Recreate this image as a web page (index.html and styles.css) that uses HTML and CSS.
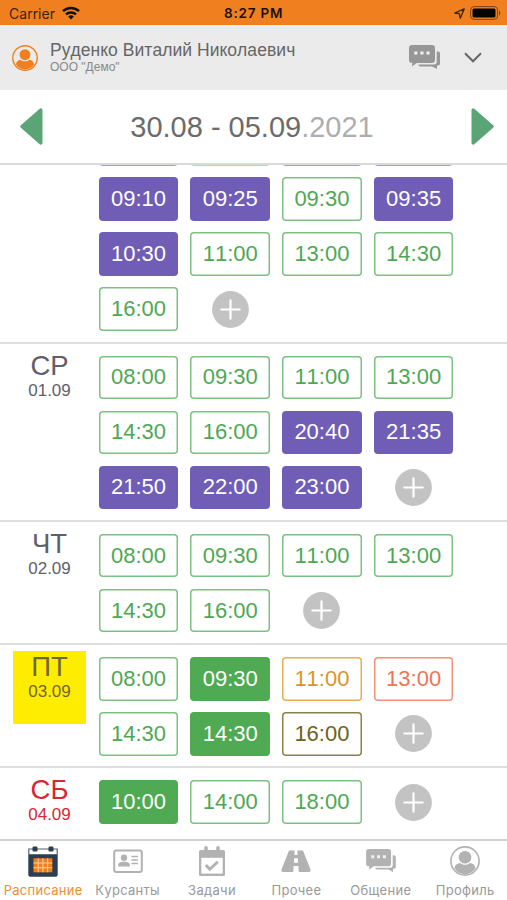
FILE: index.html
```html
<!DOCTYPE html>
<html lang="ru">
<head>
<meta charset="utf-8">
<title>Расписание</title>
<link rel="stylesheet" href="styles.css">
</head>
<body>
<svg class="defs" width="0" height="0" aria-hidden="true">
  <symbol id="plus" viewBox="0 0 37 37"><circle cx="18.5" cy="18.5" r="18.4" fill="#c3c3c3"/><path d="M18.5 9.3v18.4M9.3 18.5h18.4" stroke="#fff" stroke-width="2.2" stroke-linecap="round"/></symbol>
  <symbol id="person" viewBox="0 0 30 30"><circle cx="15" cy="15" r="14.1" fill="none" stroke="currentColor" stroke-width="1.6"/><circle cx="15" cy="11.200" r="6.300" fill="currentColor"/><path d="M4.500 22.200c.6-3.400 2.300-4.400 5.500-5.200 2.500 2.400 7.500 2.400 10 0 3.200.8 4.900 1.800 5.500 5.200C23.300 26 19.500 28.200 15 28.200S6.700 26 4.500 22.200z" fill="currentColor"/></symbol>
  <symbol id="chat" viewBox="0 0 31 24"><path d="M3 0h20a3 3 0 0 1 3 3v12a3 3 0 0 1-3 3H8l-5.200 3.600.6-3.600H3a3 3 0 0 1-3-3V3a3 3 0 0 1 3-3z" fill="currentColor"/><path d="M27.700 6.500H29a2 2 0 0 1 2 2v10a2 2 0 0 1-2 2h-1V24l-5-2.600H11.500a2 2 0 0 1-2-1.900H25a2.700 2.700 0 0 0 2.700-2.700z" fill="currentColor"/><path d="M5.300 6.500h3.100v3.100H5.300zM11.400 6.500h3.100v3.100h-3.100zM17.500 6.500h3.100v3.100h-3.100z" fill="#f1f1f1"/></symbol>
</svg>
<div class="app">
  <div class="status">
    <span class="carrier">Carrier</span>
    <svg class="wifi" width="18" height="14" viewBox="0 0 18 14"><g fill="none" stroke="#111" stroke-width="2.500"><path d="M1 5.200a11.500 11.500 0 0 1 16 0"/><path d="M4 8.400a7.300 7.300 0 0 1 10 0"/></g><path d="M9 13.400l-2.800-2.900a4 4 0 0 1 5.600 0z" fill="#111"/></svg>
    <span class="clock">8:27 PM</span>
    <svg class="locate" width="11" height="11" viewBox="0 0 11 11"><path d="M.8 5L10.200.9 6.200 10.200 5.300 5.700z" fill="none" stroke="#3a210a" stroke-width="1.300" stroke-linejoin="round"/></svg>
    <svg class="battery" width="31" height="14" viewBox="0 0 31 14"><rect x=".6" y=".6" width="27" height="12.800" rx="3.500" fill="none" stroke="#7a4412" stroke-width="1"/><rect x="2.500" y="2.500" width="23" height="9" rx="1.500" fill="#050505"/><path d="M29 4.500c1.600.7 1.600 4.300 0 5z" fill="#7a4412"/></svg>
  </div>
  <header class="account">
    <svg class="avatar" width="26" height="26"><use href="#person"/></svg>
    <div class="who"><div class="name">Руденко Виталий Николаевич</div><div class="org">ООО "Демо"</div></div>
    <svg class="messages" width="31" height="24"><use href="#chat"/></svg>
    <svg width="18" height="11" viewBox="0 0 18 11"><path d="M1 1.300l8 8 8-8" fill="none" stroke="#666" stroke-width="2"/></svg>
  </header>
  <nav class="week">
    <svg width="23" height="37" viewBox="0 0 23 37"><path d="M20.800 2L2 18.500 20.800 35z" fill="#5ba476" stroke="#5ba476" stroke-width="3.400" stroke-linejoin="round"/></svg>
    <div class="range">30.08 - 05.09<span>.2021</span></div>
    <svg width="23" height="37" viewBox="0 0 23 37"><path d="M2.200 2L21 18.500 2.200 35z" fill="#5ba476" stroke="#5ba476" stroke-width="3.400" stroke-linejoin="round"/></svg>
  </nav>
  <main class="schedule">
    <section class="day partial">
      <div class="date"></div>
      <div class="slots"><b class="booked edge"></b><b class="edge"></b><b class="booked edge"></b><b class="booked edge"></b><b class="booked">09:10</b><b class="booked">09:25</b><b>09:30</b><b class="booked">09:35</b><b class="booked">10:30</b><b>11:00</b><b>13:00</b><b>14:30</b><b>16:00</b><svg class="add"><use href="#plus"/></svg></div>
    </section>
    <section class="day">
      <div class="date"><div class="dow">СР</div><div class="num">01.09</div></div>
      <div class="slots"><b>08:00</b><b>09:30</b><b>11:00</b><b>13:00</b><b>14:30</b><b>16:00</b><b class="booked">20:40</b><b class="booked">21:35</b><b class="booked">21:50</b><b class="booked">22:00</b><b class="booked">23:00</b><svg class="add"><use href="#plus"/></svg></div>
    </section>
    <section class="day">
      <div class="date"><div class="dow">ЧТ</div><div class="num">02.09</div></div>
      <div class="slots"><b>08:00</b><b>09:30</b><b>11:00</b><b>13:00</b><b>14:30</b><b>16:00</b><svg class="add"><use href="#plus"/></svg></div>
    </section>
    <section class="day">
      <div class="date today"><div class="dow">ПТ</div><div class="num">03.09</div></div>
      <div class="slots"><b>08:00</b><b class="done">09:30</b><b class="amber">11:00</b><b class="coral">13:00</b><b>14:30</b><b class="done">14:30</b><b class="olive">16:00</b><svg class="add"><use href="#plus"/></svg></div>
    </section>
    <section class="day last">
      <div class="date weekend"><div class="dow">СБ</div><div class="num">04.09</div></div>
      <div class="slots"><b class="done">10:00</b><b>14:00</b><b>18:00</b><svg class="add"><use href="#plus"/></svg></div>
    </section>
  </main>
  <footer class="tabs">
    <div class="tab active"><svg width="30" height="32" viewBox="0 0 30 32"><path d="M.8 8.500V3h28.400v5.500" fill="none" stroke="#53616e" stroke-width="1.200"/><path d="M.3 8.200h29.400v20.500a2 2 0 0 1-2 2H2.300a2 2 0 0 1-2-2z" fill="#2c3e50"/><rect x="4.500" y=".4" width="5" height="5.200" rx="1.400" fill="#2c3e50"/><rect x="20.500" y=".4" width="5" height="5.200" rx="1.400" fill="#2c3e50"/><path d="M5.500 12.300h18.800v14H5.500z" fill="#f0801f"/><path d="M10.200 12.300v14M14.900 12.300v14M19.600 12.300v14M5.500 17h18.800M5.500 21.700h18.800" stroke="#ffd1a3" stroke-width="1"/></svg><span>Расписание</span></div>
    <div class="tab"><svg width="30" height="32" viewBox="0 0 30 32"><rect x="1.200" y="4.400" width="27.600" height="21.600" rx="2" fill="none" stroke="currentColor" stroke-width="2"/><circle cx="11" cy="11.800" r="3.200" fill="currentColor"/><path d="M5.200 20.500v-1.500c0-2.200 2.600-3.200 5.800-3.200s5.800 1 5.800 3.200v1.500z" fill="currentColor"/><path d="M18.500 10.500H25M18.500 14H25M18.500 17.500H25" stroke="currentColor" stroke-width="1.300"/></svg><span>Курсанты</span></div>
    <div class="tab"><svg width="30" height="32" viewBox="0 0 30 32"><path d="M3.500 4h23A1.500 1.500 0 0 1 28 5.500v23a1.500 1.500 0 0 1-1.500 1.500h-23A1.500 1.500 0 0 1 2 28.500v-23A1.500 1.500 0 0 1 3.500 4z" fill="currentColor"/><path d="M4.300 11.800h21.400v15.800H4.300z" fill="#fff"/><path d="M9 1.800v5M21 1.800v5" stroke="currentColor" stroke-width="3.500" stroke-linecap="round"/><path d="M8.800 19l4 4.200 8-7.500" fill="none" stroke="currentColor" stroke-width="2.900"/></svg><span>Задачи</span></div>
    <div class="tab"><svg width="30" height="32" viewBox="0 0 30 32"><path d="M8 4.500h14l7.500 19a2 2 0 0 1-1.800 2.500H2.300A2 2 0 0 1 .5 23.500z" fill="currentColor"/><path d="M13.700 4h2.600l.3 5h-3.200zM13.200 12.200h3.600l.3 4.600h-4.200zM12.600 20h4.800l.4 6.500h-5.600z" fill="#fff"/></svg><span>Прочее</span></div>
    <div class="tab"><svg width="30" height="32" viewBox="0 0 30 32"><use href="#chat" x="0" y="3" width="30" height="23"/></svg><span>Общение</span></div>
    <div class="tab"><svg width="30" height="32" viewBox="0 0 30 32"><use href="#person" x="0" y="0" width="30" height="30"/></svg><span>Профиль</span></div>
  </footer>
</div>
</body>
</html>
```
FILE: styles.css
```css
* { box-sizing: border-box; }
body { margin: 0; background: #fff; font-family: "Liberation Sans", sans-serif; font-kerning: none; }
.defs { position: absolute; }
.app { width: 507px; height: 900px; display: flex; flex-direction: column; overflow: hidden; }
.app svg { display: block; flex: none; }

.status { height: 25px; flex: none; display: flex; align-items: center; padding: 1px 6px 0 9px; background: #f0801f; font-family: Inter, sans-serif; font-size: 14px; color: #3a210a; }
.carrier { width: 53px; letter-spacing: .1px; }
.wifi { margin-top: -1px; }
.clock { width: 62px; margin-left: 144px; font-weight: 600; font-size: 13.5px; letter-spacing: .8px; color: #1c1006; white-space: nowrap; }
.locate { margin-left: auto; margin-right: 5px; }

.account { height: 65px; flex: none; display: flex; align-items: center; padding: 0 25px 0 12px; background: #ebebeb; }
.avatar { color: #f0801f; }
.who { flex: 1; margin-left: 12px; padding-bottom: 1px; white-space: nowrap; }
.name { font-size: 17.5px; line-height: 20px; letter-spacing: .06px; color: #666; }
.org { font-size: 12px; line-height: 14px; color: #888; }
.messages { color: #979797; margin: -1px 24px 0 0; }

.week { height: 75px; flex: none; display: flex; align-items: center; justify-content: space-between; padding: 0 13px 0 20px; border-bottom: 2px solid #dadada; }
.range { margin-left: -10px; font-size: 29px; line-height: 34px; color: #6b6b6b; white-space: nowrap; }
.range span { color: #adadb2; }

.schedule { flex: 1; min-height: 0; overflow: hidden; }
.day { display: flex; border-bottom: 2px solid #dedede; padding: 12px 0 10.900px 13px; }
.partial { margin-top: -54.500px; }
.partial + .day { padding-bottom: 11.200px; }
.last { border-bottom: 0; }
.date { width: 73px; flex: none; margin: -6px 12.700px 0 0; height: 48px; text-align: center; color: #60606c; white-space: nowrap; }
.dow { font-size: 27.500px; line-height: 31px; }
.num { font-size: 17px; line-height: 20px; }
.today { height: 73px; margin-bottom: -20px; background: #ffed00; color: #706638; }
.weekend { color: #d92632; }
.slots { display: grid; grid-template-columns: repeat(4, 79.700px); grid-auto-rows: 43.300px; gap: 11.700px 12px; }
.slots b { display: flex; align-items: center; justify-content: center; box-shadow: inset 0 0 0 1.500px #7dc182; border-radius: 4px; font-weight: 400; font-size: 22px; color: #4ea853; }
.slots .booked { background: #705db6; box-shadow: none; color: #fff; }
.slots .done { background: #4faa53; box-shadow: none; color: #fff; }
.slots .amber { box-shadow: inset 0 0 0 1.500px #e6ae51; color: #d7962a; }
.slots .coral { box-shadow: inset 0 0 0 1.500px #f39076; color: #ee7455; }
.slots .olive { box-shadow: inset 0 0 0 1.500px #888046; color: #6b6320; }
.slots .edge { opacity: .6; }
.add { width: 37px; height: 37px; place-self: center; }

.tabs { height: 61px; flex: none; display: grid; grid-template-columns: repeat(6, 84.400px); padding-left: 1px; border-top: 2px solid #d2d2d2; background: #fff; }
.tab { display: flex; flex-direction: column; align-items: center; padding-top: 5px; color: #b2b2b2; font-family: Inter, sans-serif; font-size: 13px; }
.tab span { line-height: 16px; margin-top: 4px; color: #999; letter-spacing: .3px; white-space: nowrap; }
.tab.active span { color: #f28b35; }
```
